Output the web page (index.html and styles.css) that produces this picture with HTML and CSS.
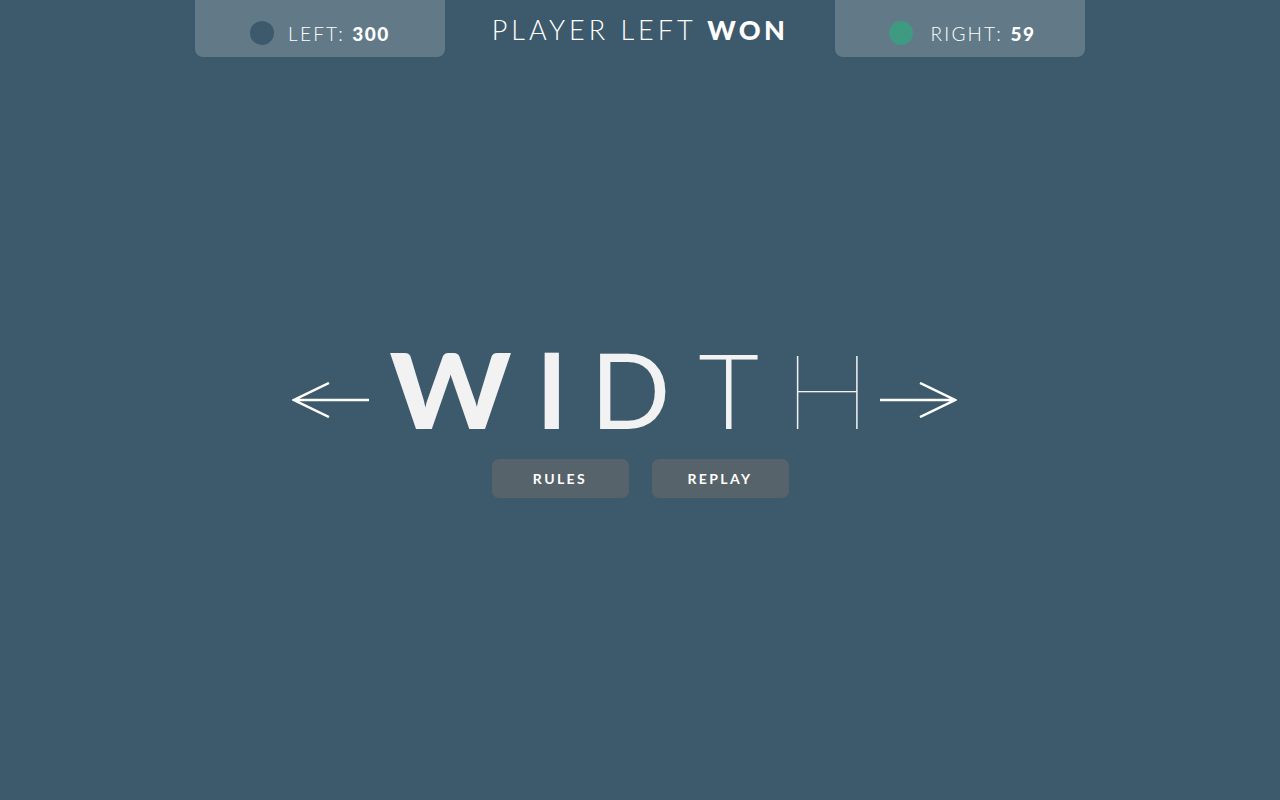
FILE: index.html
```html
<!DOCTYPE html>
<html>
<head>
<meta charset="utf-8">
<link rel="stylesheet" href="styles.css">
</head>
<body>
<header class="top">
  <div class="panel">
    <span class="dot dot-left"></span>
    <span class="score">LEFT: <b>300</b></span>
  </div>
  <div class="title">PLAYER LEFT <b>WON</b></div>
  <div class="panel panel-right">
    <span class="dot dot-right"></span>
    <span class="score">RIGHT: <b>59</b></span>
  </div>
</header>
<main class="stage">
  <div class="logo">
    <svg class="arrow" width="78" height="36" viewBox="0 0 78 36">
      <path d="M77 18 H2 M37 1 L2 18 L37 35" fill="none" stroke="#fff" stroke-width="2.5"/>
    </svg>
    <span class="l l-w">W</span>
    <span class="l l-i">I</span>
    <span class="l l-d">D</span>
    <span class="l l-t">T</span>
    <span class="l l-h">H</span>
    <svg class="arrow" width="78" height="36" viewBox="0 0 78 36">
      <path d="M1 18 H76 M41 1 L76 18 L41 35" fill="none" stroke="#fff" stroke-width="2.5"/>
    </svg>
  </div>
  <div class="buttons">
    <button class="btn">RULES</button>
    <button class="btn">REPLAY</button>
  </div>
</main>
</body>
</html>
```

FILE: styles.css
```css
html, body {
  margin: 0;
  padding: 0;
  height: 100%;
}
body {
  background: #3d5a6c;
  font-family: Lato, "Open Sans", sans-serif;
  color: #fff;
  overflow: hidden;
}
.top {
  display: flex;
  justify-content: center;
  align-items: flex-start;
}
.panel {
  width: 250px;
  height: 57px;
  background: #627a88;
  border-radius: 0 0 8px 8px;
  display: flex;
  align-items: center;
  justify-content: center;
  gap: 14px;
  padding-top: 9px;
  box-sizing: border-box;
}
.panel-right { gap: 18px; padding-left: 4px; }
.dot {
  width: 24px;
  height: 24px;
  border-radius: 50%;
  display: inline-block;
}
.dot-left { background: #3d5a6c; }
.dot-right { background: #3e9a80; }
.score {
  font-family: Lato, sans-serif;
  font-weight: 300;
  font-size: 19px;
  letter-spacing: 2.2px;
}
.score b { font-weight: 900; letter-spacing: 1.5px; }
.title {
  width: 390px;
  text-align: center;
  font-family: Lato, sans-serif;
  font-weight: 300;
  font-size: 27px;
  letter-spacing: 4px;
  padding-top: 13px;
}
.title b { font-weight: 900; letter-spacing: 3.4px; }
.stage {
  padding-top: 281px;
  display: flex;
  flex-direction: column;
  align-items: center;
}
.logo {
  display: flex;
  align-items: center;
  height: 100px;
  margin-right: 31px;
}
.arrow { display: block; margin-top: 24px; }
.l {
  font-family: Lato, sans-serif;
  font-size: 105px;
  line-height: 100px;
  color: #f2f2f2;
}
.l-w { font-weight: 900; margin-left: 25px; transform: scaleX(1.1); }
.l-i { font-weight: 700; margin-left: 30px; }
.l-d { font-weight: 400; margin-left: 23px; }
.l-t { font-weight: 300; margin-left: 28px; }
.l-h { font-weight: 100; margin-left: 29px; margin-right: 12px; transform: scaleX(1.12); }
.buttons {
  display: flex;
  gap: 23px;
  margin-top: 21px;
}
.btn {
  width: 137px;
  height: 39px;
  border: none;
  border-radius: 7px;
  background: #56636b;
  color: #fff;
  font-family: Lato, sans-serif;
  font-weight: 700;
  font-size: 14px;
  letter-spacing: 2.4px;
  padding: 0;
}
```
